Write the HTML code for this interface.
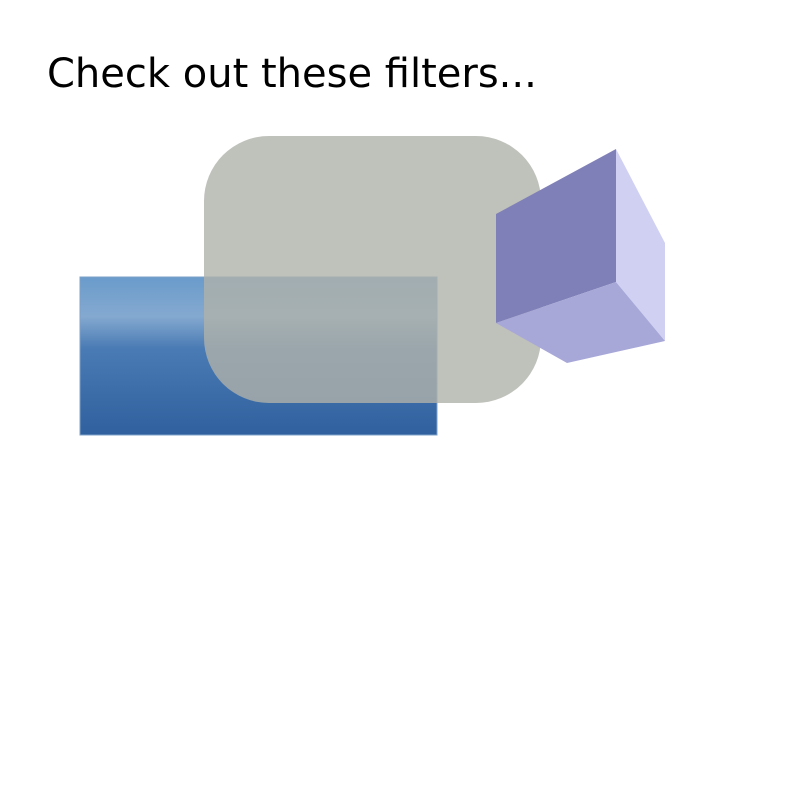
<!DOCTYPE html>
<html><head><style>
html,body{margin:0;padding:0;background:#fff;width:800px;height:800px;overflow:hidden}
</style></head><body>
<svg width="800" height="800" xmlns="http://www.w3.org/2000/svg">
<defs>
<linearGradient id="b" x1="0" y1="0" x2="0" y2="1">
<stop offset="0" stop-color="#6a9bcb"/>
<stop offset="0.25" stop-color="#84a9d0"/>
<stop offset="0.45" stop-color="#4a7bb4"/>
<stop offset="1" stop-color="#30609e"/>
</linearGradient>
</defs>
<text x="47" y="87" font-family="DejaVu Sans, sans-serif" font-size="40" fill="#000">Check out these filters...</text>
<rect x="80" y="277" width="357" height="158" fill="url(#b)" stroke="#7da0c8" stroke-width="1"/>
<rect x="204" y="136" width="337" height="267" rx="65" ry="65" fill="#afb1aa" fill-opacity="0.8"/>
<polygon points="496,214 616,149 616,282 496,323" fill="#8080b8"/>
<polygon points="616,149 665,243 665,341 616,282" fill="#d0d0f2"/>
<polygon points="496,323 616,282 665,341 567,363" fill="#a8a8d8"/>
</svg>
</body></html>
